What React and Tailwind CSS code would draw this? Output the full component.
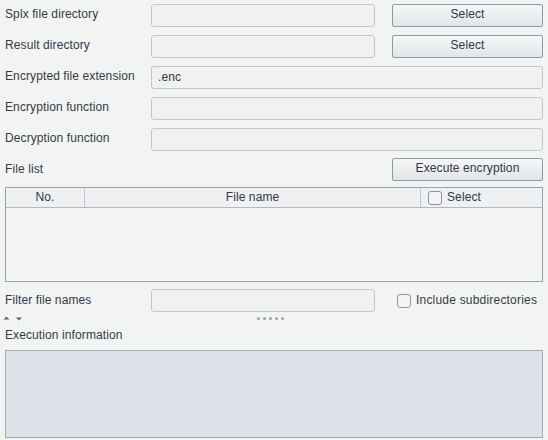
const font = { fontFamily: '"Liberation Sans", Arial, sans-serif' };

function Field({ className = '', value = '' }) {
  return (
    <div className={`h-[23px] rounded-[3px] border border-[#c3c8cc] bg-[#f0f1f1] px-[6px] pb-[2px] flex items-center text-[12px] text-[#2f3640] ${className}`}>
      {value}
    </div>
  );
}

function Button({ children }) {
  return (
    <button className="h-[23px] w-[151px] shrink-0 rounded-[2px] border border-[#8f9aa4] bg-gradient-to-b from-[#f5f6f7] via-[#eceef0] to-[#e2e5e8] text-[12px] text-[#2f3844] pb-[3px] flex items-center justify-center">
      {children}
    </button>
  );
}

function Box() {
  return <span className="inline-block w-[14px] h-[14px] rounded-[3px] border border-[#8c939a] bg-[#f3f4f5] shrink-0" />;
}

function Row({ label, children }) {
  return (
    <div className="flex items-center h-[23px]">
      <div className="w-[146px] shrink-0 text-[12px] text-[#333a44] pb-[3px]">{label}</div>
      {children}
    </div>
  );
}

export default function App() {
  return (
    <div className="w-[548px] h-[440px] bg-[#f2f4f4] px-[5px] pt-[4px] flex flex-col overflow-hidden tracking-[0.1px]" style={font}>
      <div className="flex flex-col gap-[8px]">
        <Row label="Splx file directory">
          <Field className="w-[224px]" />
          <div className="w-[17px]" />
          <Button>Select</Button>
        </Row>
        <Row label="Result directory">
          <Field className="w-[224px]" />
          <div className="w-[17px]" />
          <Button>Select</Button>
        </Row>
        <Row label="Encrypted file extension">
          <Field className="flex-1 px-[3px]" value=".enc" />
        </Row>
        <Row label="Encryption function">
          <Field className="flex-1" />
        </Row>
        <Row label="Decryption function">
          <Field className="flex-1" />
        </Row>
      </div>

      <div className="flex items-center justify-between h-[23px] mt-[7px]">
        <span className="text-[12px] text-[#333a44] -mt-[2px]">File list</span>
        <Button>Execute encryption</Button>
      </div>

      <div className="mt-[6px] h-[95px] border border-[#9aa2aa] bg-[#f2f4f4] flex flex-col">
        <div className="h-[20px] flex bg-[#eef0f1] border-b border-[#b3babf] text-[12px] text-[#333a44]">
          <div className="w-[79px] flex items-center justify-center border-r border-[#c3c8cc] pb-[1px]">No.</div>
          <div className="w-[336px] flex items-center justify-center border-r border-[#c3c8cc] pb-[1px]">File name</div>
          <div className="flex-1 flex items-center gap-[5px] pl-[7px]">
            <Box />
            <span className="-mt-[2px]">Select</span>
          </div>
        </div>
      </div>

      <div className="flex items-center h-[23px] mt-[7px]">
        <div className="w-[146px] shrink-0 text-[12px] text-[#333a44] pb-[2px]">Filter file names</div>
        <Field className="w-[224px]" />
        <div className="flex items-center gap-[5px] ml-[22px] text-[12px] text-[#333a44]">
          <Box />
          <span className="-mt-[2px] tracking-[0.2px]">Include subdirectories</span>
        </div>
      </div>

      <div className="relative h-[12px] -mx-[5px]">
        <svg className="absolute left-[2px] top-[3px]" width="22" height="7" viewBox="0 0 22 7">
          <path d="M1.5 4.5 L4.5 1.5 L7.5 4.5 Z" fill="#5f666c" />
          <path d="M14 2.5 L17 5.5 L20 2.5 Z" fill="#5f666c" />
        </svg>
        <div className="absolute left-[257px] top-[5px] flex gap-[3px]">
          <span className="w-[3px] h-[3px] rounded-full bg-[#9aa0a6]" />
          <span className="w-[3px] h-[3px] rounded-full bg-[#9aa0a6]" />
          <span className="w-[3px] h-[3px] rounded-full bg-[#9aa0a6]" />
          <span className="w-[3px] h-[3px] rounded-full bg-[#9aa0a6]" />
          <span className="w-[3px] h-[3px] rounded-full bg-[#9aa0a6]" />
        </div>
      </div>

      <div className="h-[20px] flex items-center text-[12px] text-[#333a44] mt-[1px]">Execution information</div>

      <div className="mt-[5px] h-[88px] border border-[#a3aab1] bg-[#dde1e8]" />
    </div>
  );
}
